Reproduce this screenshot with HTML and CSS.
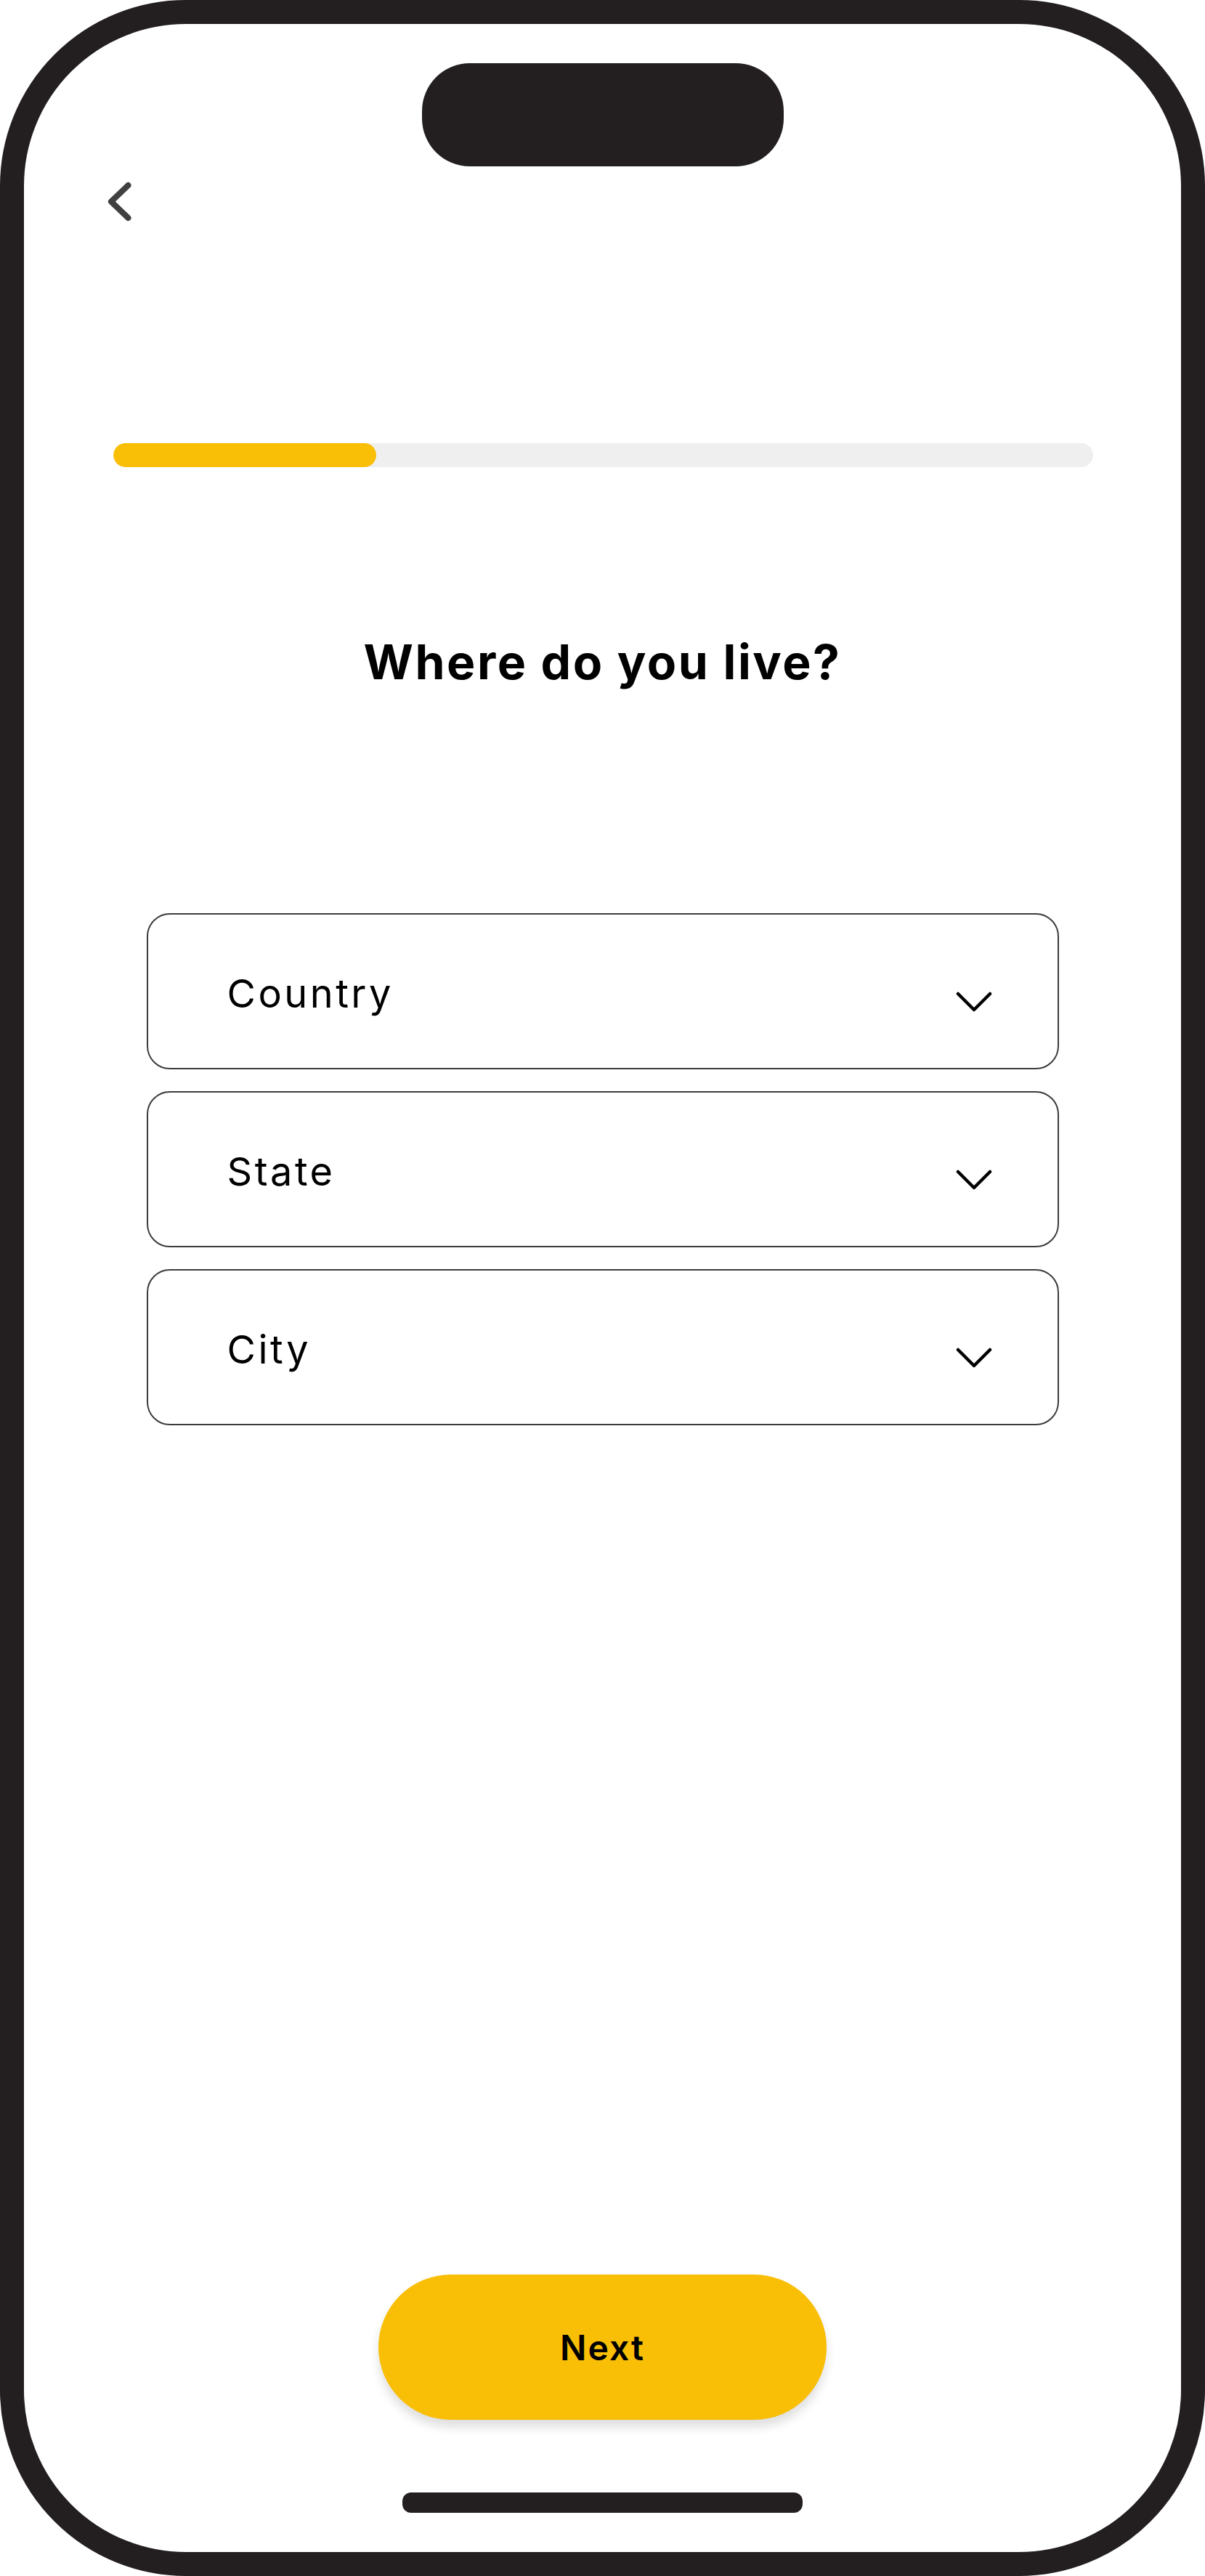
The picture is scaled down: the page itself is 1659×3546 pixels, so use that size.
FILE: index.html
```html
<!DOCTYPE html>
<html>
  <head>
    <meta charset="utf-8">
    <meta name="viewport" content="width=device-width">
    <title>Where do you live?</title>
    <link rel="stylesheet" href="styles.css">
  </head>
  <body>
    <div class="phone">
      <div class="island"></div>
      <div class="top-bar">
        <button class="back-button" aria-label="Back">
          <svg width="36" height="56" viewBox="0 0 36 56">
            <polyline points="30.5,6 7,28.5 30.5,51" fill="none" stroke="#404040" stroke-width="8" stroke-linecap="round" stroke-linejoin="round"/>
          </svg>
        </button>
      </div>
      <div class="progress">
        <div class="progress-fill" style="width: 26.8%"></div>
      </div>
      <h1>Where do you live?</h1>
      <div class="fields">
        <div class="select-box">
          <span class="select-label">Country</span>
          <svg class="select-arrow" width="50" height="30" viewBox="0 0 50 30">
            <polyline points="3,4 25,26 47,4" fill="none" stroke="#000" stroke-width="4.5" stroke-linecap="round" stroke-linejoin="round"/>
          </svg>
        </div>
        <div class="select-box">
          <span class="select-label">State</span>
          <svg class="select-arrow" width="50" height="30" viewBox="0 0 50 30">
            <polyline points="3,4 25,26 47,4" fill="none" stroke="#000" stroke-width="4.5" stroke-linecap="round" stroke-linejoin="round"/>
          </svg>
        </div>
        <div class="select-box">
          <span class="select-label">City</span>
          <svg class="select-arrow" width="50" height="30" viewBox="0 0 50 30">
            <polyline points="3,4 25,26 47,4" fill="none" stroke="#000" stroke-width="4.5" stroke-linecap="round" stroke-linejoin="round"/>
          </svg>
        </div>
      </div>
      <button class="next-button">Next</button>
      <div class="home-indicator"></div>
    </div>
  </body>
</html>
```

FILE: styles.css
```css
* {
  margin: 0;
  padding: 0;
  box-sizing: border-box;
}
body {
  background: white;
  font-family: Inter, "Liberation Sans", sans-serif;
  color: #000;
}
.phone {
  width: 1659px;
  height: 3546px;
  border: 33px solid #231f20;
  border-radius: 256px;
  background: white;
  display: flex;
  flex-direction: column;
  overflow: hidden;
}
.island {
  width: 498px;
  height: 142px;
  margin: 54px auto 0;
  border-radius: 66px;
  background: #231f20;
  flex-shrink: 0;
}
.top-bar {
  padding-left: 113px;
  margin-top: 20px;
  height: 56px;
}
.back-button {
  border: none;
  background: none;
  display: block;
  cursor: pointer;
}
.progress {
  margin: 305px 121px 0 123px;
  height: 33px;
  border-radius: 17px;
  background: #efefef;
  overflow: hidden;
}
.progress-fill {
  height: 100%;
  border-radius: 17px;
  background: #f9be06;
}
h1 {
  margin-top: 236px;
  font-size: 66px;
  line-height: 65px;
  font-weight: 700;
  letter-spacing: 2.5px;
  text-align: center;
}
.fields {
  width: 1256px;
  margin: 313px auto 0;
  display: flex;
  flex-direction: column;
  gap: 30px;
}
.select-box {
  height: 215px;
  border: 2px solid #3c3c3c;
  border-radius: 32px;
  display: flex;
  align-items: center;
  justify-content: space-between;
  padding: 0 90px 0 109px;
  cursor: pointer;
}
.select-label {
  font-size: 54px;
  letter-spacing: 3.5px;
  padding-top: 6px;
}
.select-arrow {
  margin-top: 28px;
}
.next-button {
  margin: auto auto 0;
  width: 617px;
  height: 200px;
  border: none;
  border-radius: 100px;
  background: #f9be06;
  box-shadow: 0 10px 14px rgba(0, 0, 0, 0.13);
  font-family: Inter, "Liberation Sans", sans-serif;
  font-size: 48px;
  font-weight: 600;
  letter-spacing: 2px;
  color: #000;
  cursor: pointer;
}
.home-indicator {
  width: 551px;
  height: 28px;
  margin: 100px auto 54px;
  border-radius: 12px;
  background: #231f20;
  flex-shrink: 0;
}
```
